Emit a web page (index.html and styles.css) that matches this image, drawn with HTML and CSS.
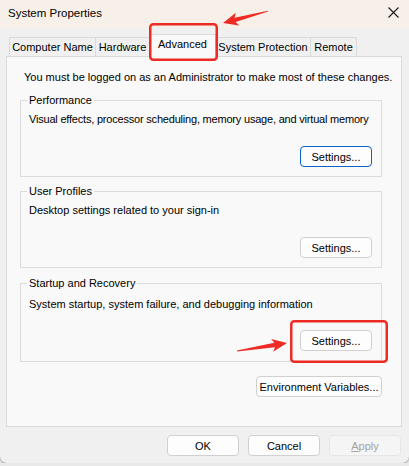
FILE: index.html
```html
<!DOCTYPE html>
<html>
<head>
<meta charset="utf-8">
<link rel="stylesheet" href="styles.css">
</head>
<body>
<div class="window">
  <div class="titlebar">
    <span class="title">System Properties</span>
    <svg class="close" width="11" height="11" viewBox="0 0 11 11"><path d="M0.5 0.5 L10.5 10.5 M10.5 0.5 L0.5 10.5" stroke="#1a1a1a" stroke-width="1.1" fill="none"/></svg>
  </div>
  <div class="client">
    <div class="tabs">
      <div class="tab t-cn">Computer Name</div>
      <div class="tab t-hw">Hardware</div>
      <div class="tab t-adv active">Advanced</div>
      <div class="tab t-sp">System Protection</div>
      <div class="tab t-rm">Remote</div>
    </div>
    <div class="panel">
      <p class="note">You must be logged on as an Administrator to make most of these changes.</p>
      <fieldset class="group">
        <legend>Performance</legend>
        <p class="desc tight">Visual effects, processor scheduling, memory usage, and virtual memory</p>
        <div class="row"><button class="btn focus">Settings...</button></div>
      </fieldset>
      <fieldset class="group">
        <legend>User Profiles</legend>
        <p class="desc">Desktop settings related to your sign-in</p>
        <div class="row"><button class="btn">Settings...</button></div>
      </fieldset>
      <fieldset class="group last">
        <legend>Startup and Recovery</legend>
        <p class="desc">System startup, system failure, and debugging information</p>
        <div class="row"><button class="btn">Settings...</button></div>
      </fieldset>
      <div class="row env-row"><button class="btn env">Environment Variables...</button></div>
    </div>
    <div class="footer">
      <button class="btn">OK</button>
      <button class="btn">Cancel</button>
      <button class="btn disabled"><u>A</u>pply</button>
    </div>
  </div>
  <svg class="annot" width="409" height="466" viewBox="0 0 409 466">
    <rect x="150.25" y="24.25" width="66.5" height="35.5" rx="3" fill="none" stroke="#ee2a24" stroke-width="2.5"/>
    <rect x="291.25" y="321.25" width="95.5" height="40.5" rx="3" fill="none" stroke="#ee2a24" stroke-width="2.5"/>
    <g fill="#ee2a24">
      <polygon transform="translate(223,23) rotate(-14.9)" points="0,0 15,-6.5 12.5,-2.2 46.6,-0.4 46.6,0.4 12.5,2.2 15,6.5"/>
      <polygon transform="translate(287,343) rotate(170.9)" points="0,0 15,-6.5 12.5,-2.2 50.6,-0.4 50.6,0.4 12.5,2.2 15,6.5"/>
    </g>
  </svg>
</div>
</body>
</html>
```

FILE: styles.css
```css
* { box-sizing: border-box; }
html, body {
  margin: 0;
  padding: 0;
  background: #e9e9e9;
}
body {
  font-family: "Liberation Sans", Arial, sans-serif;
  font-size: 11px;
  color: #000;
}
.window {
  position: relative;
  width: 409px;
  height: 463px;
  background: #f0f0f0;
  border-radius: 0 0 7px 7px;
  box-shadow: 0 1px 2px rgba(0,0,0,0.35);
  overflow: hidden;
}
.titlebar {
  height: 28px;
  background: #f6f0e8;
  display: flex;
  align-items: center;
  justify-content: space-between;
  padding: 0 10px 2px 8px;
}
.title {
  font-size: 11.5px;
  line-height: 16px;
}
.close {
  display: block;
  margin-top: -1px;
}
.client {
  display: flex;
  flex-direction: column;
}
.tabs {
  display: flex;
  align-items: flex-end;
  height: 28px;
  padding-left: 9px;
  position: relative;
  z-index: 1;
}
.tab {
  height: 19px;
  border: 1px solid #dadada;
  border-bottom: none;
  background: #f0f0f0;
  text-align: center;
  line-height: 18px;
  white-space: nowrap;
  margin-left: -1px;
}
.t-cn { width: 87px; margin-left: 0; }
.t-hw { width: 55px; }
.t-adv { width: 67px; }
.t-sp { width: 96px; }
.t-rm { width: 47px; }
.tab.active {
  height: 23px;
  background: #f9f9f9;
  margin-bottom: -1px;
  line-height: 19px;
  position: relative;
}
.panel {
  margin: 0 7px 0 6px;
  height: 371px;
  background: #f9f9f9;
  border: 1px solid #dadada;
  padding: 12px 19px 0 13px;
}
.note {
  margin: 0 0 0 4px;
  line-height: 16px;
  white-space: nowrap;
}
.group {
  margin: 6px 0 0 0;
  border: 1px solid #dcdcdc;
  padding: 3px 9px 9px 8px;
  min-width: 0;
}
.group:first-of-type { margin-top: 7px; }
.group.last { margin-top: 7px; padding-top: 5px; padding-bottom: 10px; }
.group.last .row { margin-top: 18px; }
.group legend {
  padding: 0 2px;
  margin-left: -2px;
  line-height: 16px;
}
.desc {
  margin: 0;
  line-height: 16px;
  white-space: nowrap;
}
.desc.tight { letter-spacing: -0.2px; }
.row {
  display: flex;
  justify-content: flex-end;
  margin-top: 19px;
}
.env-row { margin-top: 14px; }
.btn {
  width: 72px;
  height: 21px;
  padding: 0;
  font-family: inherit;
  font-size: 11px;
  color: #000;
  background: #fdfdfd;
  border: 1px solid #d0d0d0;
  border-radius: 4px;
  line-height: 18px;
  white-space: nowrap;
}
.btn.focus {
  border: 1px solid #0a64c0;
}
.btn.env { width: 126px; }
.btn.disabled {
  color: #a3a3a3;
  background: #f5f5f5;
  border-color: #e6e6e6;
}
.footer {
  display: flex;
  justify-content: flex-end;
  gap: 9px;
  padding: 8px 8px 0 0;
}
.annot {
  position: absolute;
  left: 0;
  top: 0;
  pointer-events: none;
  z-index: 5;
}
```
